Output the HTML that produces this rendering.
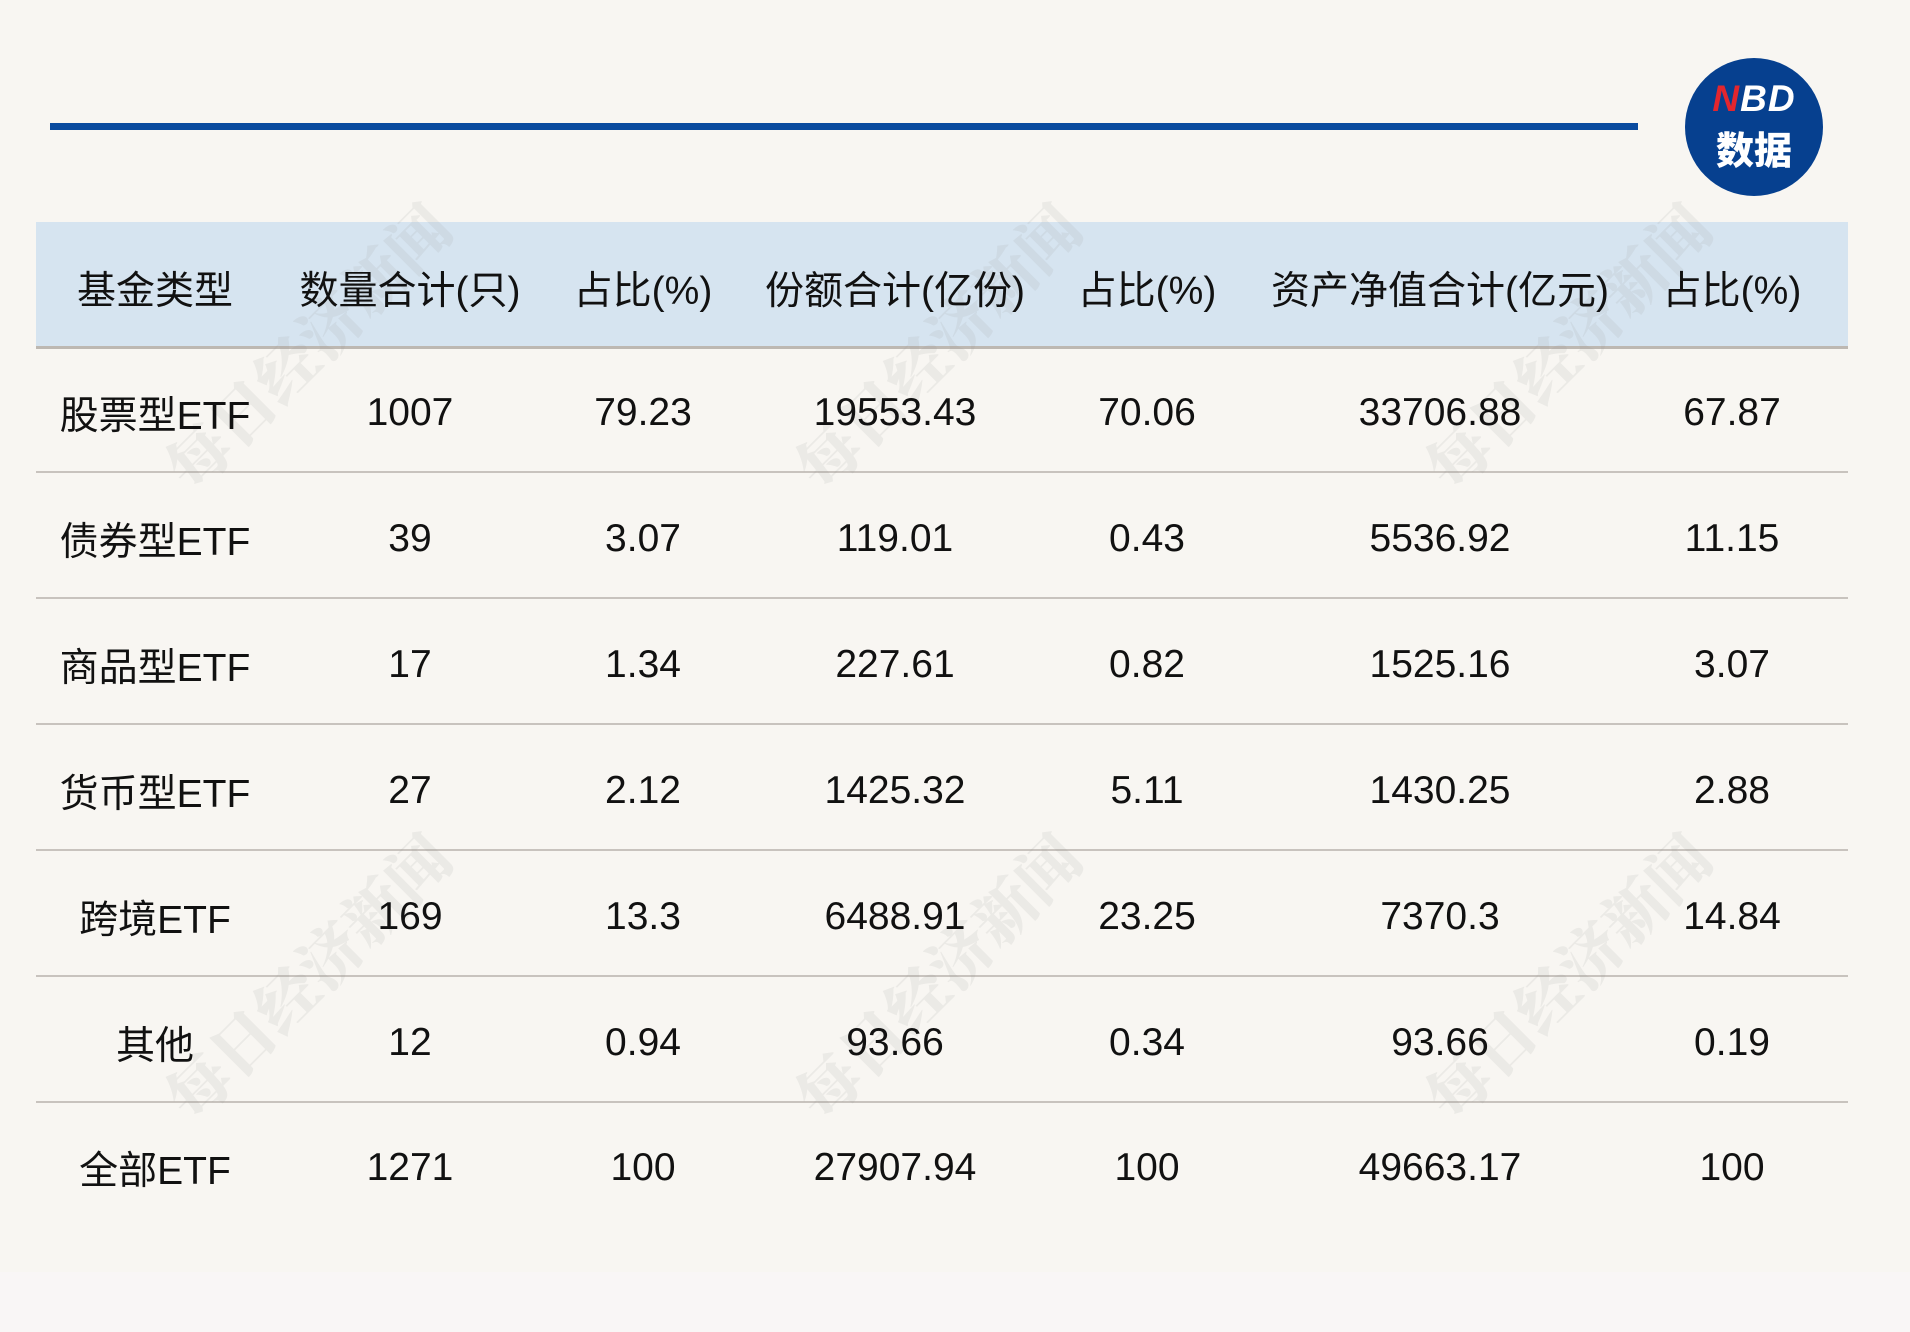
<!DOCTYPE html>
<html><head><meta charset="utf-8"><style>
body{margin:0;width:1910px;height:1332px;background:#f8f6f2;position:relative;overflow:hidden;font-family:"Liberation Sans","Noto Sans CJK SC",sans-serif;color:#111}
.bot{position:absolute;left:0;top:1272px;width:1910px;height:60px;background:#f9f6f6}
.line{position:absolute;left:50px;top:123px;width:1588px;height:7px;background:#0a4b9f}
.logo{position:absolute;left:1685px;top:58px;width:138px;height:138px;border-radius:50%;background:#06408f;color:#fff;text-align:center;font-weight:bold}
.logo .a{position:absolute;top:20px;left:0;width:100%;font-size:37px;letter-spacing:1px;font-style:italic}
.logo .a span{color:#e3262e}
.logo .b{position:absolute;top:62px;left:0;width:100%;font-size:38px;font-family:"Noto Sans CJK SC",sans-serif;font-weight:900}
.hdr{position:absolute;left:36px;top:222px;width:1812px;height:124px;background:#d6e4f0;border-bottom:3px solid #bdb8b2}
.rl{position:absolute;left:36px;width:1812px;height:2px;background:#c8c3be}
.t{position:absolute;transform:translate(-50%,-50%);white-space:nowrap;font-size:39px}
.h{font-size:39px}
.wm{position:absolute;font-family:"Noto Serif CJK SC",serif;font-weight:900;font-size:62px;color:rgba(150,150,150,0.12);transform:rotate(-45deg);white-space:nowrap}
</style></head><body>
<div class="bot"></div>
<div class="line"></div>
<div class="logo"><div class="a"><span>N</span>BD</div><div class="b">数据</div></div>
<div class="hdr"></div>
<div class="rl" style="top:471px"></div>
<div class="rl" style="top:597px"></div>
<div class="rl" style="top:723px"></div>
<div class="rl" style="top:849px"></div>
<div class="rl" style="top:975px"></div>
<div class="rl" style="top:1101px"></div>
<div class="wm" style="left:120px;top:300px">每日经济新闻</div>
<div class="wm" style="left:750px;top:300px">每日经济新闻</div>
<div class="wm" style="left:1380px;top:300px">每日经济新闻</div>
<div class="wm" style="left:120px;top:930px">每日经济新闻</div>
<div class="wm" style="left:750px;top:930px">每日经济新闻</div>
<div class="wm" style="left:1380px;top:930px">每日经济新闻</div>
<div id="cells"></div>
<script>
var xs=[155,410,643,895,1147,1440,1732];
var rows=[["基金类型","数量合计(只)","占比(%)","份额合计(亿份)","占比(%)","资产净值合计(亿元)","占比(%)"],
["股票型ETF","1007","79.23","19553.43","70.06","33706.88","67.87"],
["债券型ETF","39","3.07","119.01","0.43","5536.92","11.15"],
["商品型ETF","17","1.34","227.61","0.82","1525.16","3.07"],
["货币型ETF","27","2.12","1425.32","5.11","1430.25","2.88"],
["跨境ETF","169","13.3","6488.91","23.25","7370.3","14.84"],
["其他","12","0.94","93.66","0.34","93.66","0.19"],
["全部ETF","1271","100","27907.94","100","49663.17","100"]];
var ys=[288,413,539,665,791,917,1043,1168];
var h="";
rows.forEach(function(r,i){r.forEach(function(c,j){h+='<div class="t" style="left:'+xs[j]+'px;top:'+ys[i]+'px">'+c+'</div>';});});
document.getElementById("cells").innerHTML=h;
</script>
</body></html>
